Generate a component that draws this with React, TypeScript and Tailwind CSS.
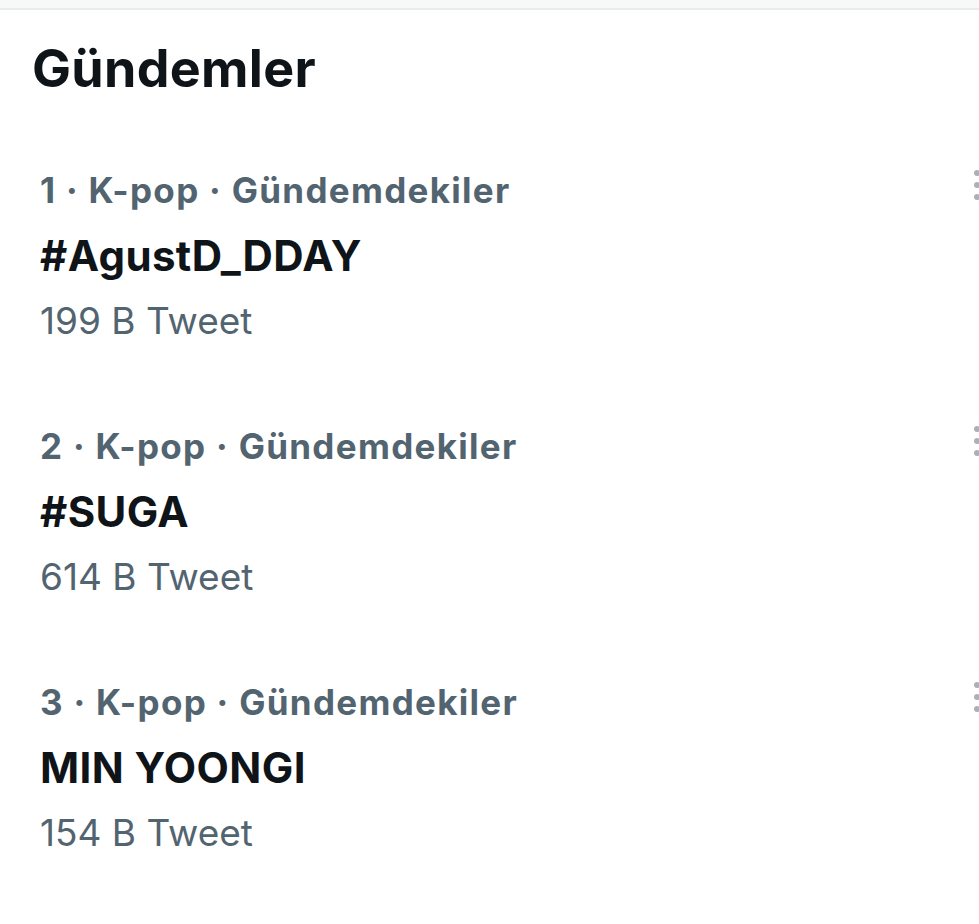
import React from 'react';

const trends = [
  { rank: 1, name: '#AgustD_DDAY', count: '199 B Tweet' },
  { rank: 2, name: '#SUGA', count: '614 B Tweet' },
  { rank: 3, name: 'MIN YOONGI', count: '154 B Tweet' },
];

const MoreDots: React.FC = () => (
  <div className="flex flex-col items-center gap-[6px]">
    <span className="block w-[6px] h-[6px] rounded-full bg-[#a7b3bc]" />
    <span className="block w-[6px] h-[6px] rounded-full bg-[#a7b3bc]" />
    <span className="block w-[6px] h-[6px] rounded-full bg-[#a7b3bc]" />
  </div>
);

export default function App() {
  return (
    <div
      className="w-[979px] h-[924px] overflow-hidden bg-white"
      style={{ fontFamily: 'Inter, "Liberation Sans", Arial, sans-serif' }}
    >
      <div className="h-[10px] bg-[#f7f9f9] border-b-2 border-[#e7ecee]" />
      <h1 className="pl-[32px] pt-[27px] text-[52px] leading-[64px] font-bold tracking-[0.3px] text-[#0f1419]">
        Gündemler
      </h1>
      <div className="pt-[64px]">
        {trends.map((t) => (
          <div key={t.rank} className="flex justify-between pl-[40px] h-[256px]">
            <div className="flex flex-col">
              <div className="text-[35px] leading-[50px] font-bold tracking-[1.3px] text-[#536471]">
                {t.rank} · K-pop · Gündemdekiler
              </div>
              <div className="text-[42px] leading-[82px] font-bold tracking-[0.4px] text-[#0f1419]">
                {t.name}
              </div>
              <div className="text-[37px] leading-[48px] text-[#536471]">{t.count}</div>
            </div>
            <div className="mr-[-1px] pt-[5px]">
              <MoreDots />
            </div>
          </div>
        ))}
      </div>
    </div>
  );
}
